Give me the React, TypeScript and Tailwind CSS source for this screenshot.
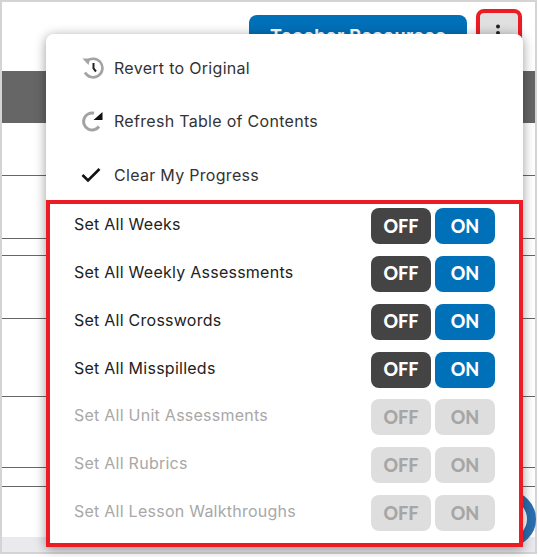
const font = "font-['Inter','Liberation_Sans',sans-serif]";

const toggles = [
  { label: "Set All Weeks", active: true },
  { label: "Set All Weekly Assessments", active: true },
  { label: "Set All Crosswords", active: true },
  { label: "Set All Misspilleds", active: true },
  { label: "Set All Unit Assessments", active: false },
  { label: "Set All Rubrics", active: false },
  { label: "Set All Lesson Walkthroughs", active: false },
];

const tableRows = ["h-[52px] bg-[#666666]", "h-[53px] border-b border-[#666666]", "h-[63px] border-b border-[#666666]", "h-[17px] border-b border-[#666666]", "h-[63px] border-b border-[#666666]", "h-[78px] border-b border-[#666666]", "h-[71px] border-b border-[#666666]", "h-[19px] border-b border-[#666666]"];

function RevertIcon() {
  return (
    <svg width="22" height="22" viewBox="0 0 22 22" fill="none">
      <path d="M4.5 4.5A9.3 9.3 0 1 1 3 15.5" stroke="#a3a3a3" strokeWidth="2.6" />
      <path d="M0.5 1.5h7.5l-1.5 6.5z" fill="#a3a3a3" />
      <path d="M11.5 6v5.5l2.5 3" stroke="#222222" strokeWidth="2" />
    </svg>
  );
}

function RefreshIcon() {
  return (
    <svg width="22" height="22" viewBox="0 0 22 22" fill="none">
      <path d="M17 16.5A8.5 8.5 0 1 1 12 3.2" stroke="#a3a3a3" strokeWidth="3" />
      <path d="M20.5 2v8h-9z" fill="#111111" />
    </svg>
  );
}

function CheckIcon() {
  return (
    <svg width="20" height="16" viewBox="0 0 20 16" fill="none">
      <path d="M1.5 8l5.5 5.5L18.5 2" stroke="#111111" strokeWidth="2.6" />
    </svg>
  );
}

function KebabIcon() {
  return (
    <svg width="6" height="18" viewBox="0 0 6 18" fill="#222222">
      <circle cx="3" cy="2.5" r="2" />
      <circle cx="3" cy="9" r="2" />
      <circle cx="3" cy="15.5" r="2" />
    </svg>
  );
}

export default function App() {
  return (
    <div className={`relative h-[557px] w-[539px] overflow-hidden bg-white ${font}`}>
      <div className="flex h-[554px] w-[537px] flex-col border-x-2 border-y-2 border-[#d4d4d4]">
        <div className="flex h-[69px] justify-end gap-[9px] pr-[13px] pt-[7px]">
          <button className="mt-[6px] h-[40px] w-[218px] rounded-t-lg bg-[#0070b8] text-[18px] font-bold tracking-[0.4px] text-white">Teacher Resources</button>
          <button className="flex h-[47px] w-[46px] items-center justify-center rounded-lg border-4 border-[#ed1c24] bg-[#e0e0e0] pr-[2px] shadow">
            <KebabIcon />
          </button>
        </div>
        <div className="flex-1">
          {tableRows.map((row, i) => (
            <div key={i} className={row} />
          ))}
        </div>
        <div className="h-[15px] bg-[#e9e9ee]" />
      </div>

      <div className="absolute bottom-[10px] right-[3px] h-[56px] w-[56px] rounded-full border-[9px] border-[#2a6fb0]" />

      <div className="absolute left-[46px] top-[34px] w-[477px] rounded-t-lg bg-white shadow-[0_2px_12px_rgba(0,0,0,0.4)]">
        <div className="flex h-[166px] flex-col text-[16px] tracking-[0.3px] text-[#333333]">
          <div className="flex h-[53px] items-center gap-[10px] pl-[36px] pt-[14px]"><RevertIcon /><span>Revert to Original</span></div>
          <div className="flex h-[53px] items-center gap-[10px] pl-[36px] pt-[14px]"><RefreshIcon /><span>Refresh Table of Contents</span></div>
          <div className="flex h-[53px] items-center gap-[13px] pl-[35px] pt-[16px]"><CheckIcon /><span>Clear My Progress</span></div>
        </div>
        <div className="flex h-[347px] flex-col border-4 border-[#ed1c24] pl-[24px] pr-[24px] pt-[4px]">
          {toggles.map((t) => (
            <div key={t.label} className="flex h-[48px] items-start justify-between">
              <span className={`mt-[4px] text-[16px] tracking-[0.25px] ${t.active ? "text-[#222222]" : "text-[#a8a8a8]"}`}>{t.label}</span>
              <div className="flex gap-[4px] font-['Lato',sans-serif] text-[18px] font-black">
                <span className={`flex h-[36px] w-[60px] items-center justify-center rounded-lg ${t.active ? "bg-[#444444] text-white" : "bg-[#dedede] text-[#a6a6a6]"}`}>OFF</span>
                <span className={`flex h-[36px] w-[60px] items-center justify-center rounded-lg ${t.active ? "bg-[#0070b8] text-white" : "bg-[#dedede] text-[#a6a6a6]"}`}>ON</span>
              </div>
            </div>
          ))}
        </div>
      </div>
    </div>
  );
}
